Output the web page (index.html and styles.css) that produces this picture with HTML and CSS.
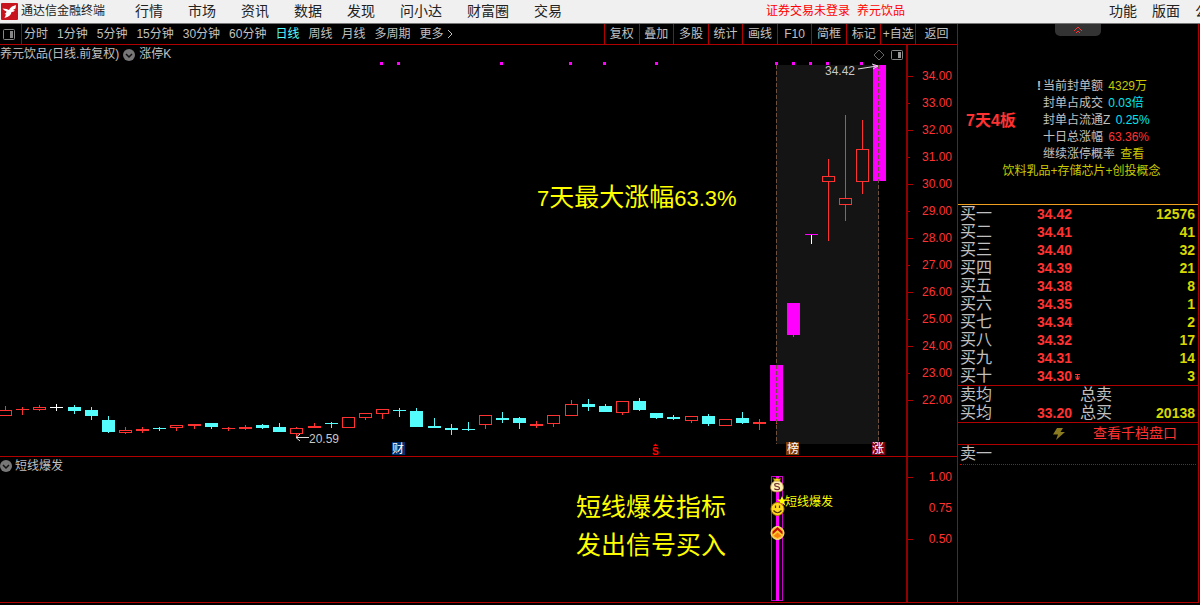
FILE: index.html
```html
<!DOCTYPE html>
<html lang="zh-CN">

<head>
    <meta charset="utf-8" />
    <title>通达信金融终端</title>
    <link rel="stylesheet" href="styles.css">
    <script src="chart.js" defer></script>
</head>

<body>
    <header class="top">
        <svg class="logo" viewBox="0 0 17 17" width="17" height="17">
            <rect width="17" height="17" rx="1" fill="#c8141c" />
            <path d="M1.500 5.500l4 .5 2.500 1q1-2.500 3-3.500l4-1.500-.5 3.500-2.500 1.500 2 .5q-1.500 1.500-3.500 1.500-.5 4.500-7 6l1.500-3.500-1.500-.500q2-1 2-2.500-2.500-1-4-3z" fill="#fff" />
        </svg>
        <span class="brand">通达信金融终端</span>
        <nav class="menu">
            <a href="#">行情</a>
            <a href="#">市场</a>
            <a href="#">资讯</a>
            <a href="#">数据</a>
            <a href="#">发现</a>
            <a href="#">问小达</a>
            <a href="#">财富圈</a>
            <a href="#">交易</a>
        </nav>
        <div class="status"><span>证券交易未登录</span><span>养元饮品</span></div>
        <nav class="tools">
            <a href="#">功能</a>
            <a href="#">版面</a>
            <a href="#">公</a>
        </nav>
    </header>

    <div class="main">
        <main class="left">
            <div class="bar">
                <button class="side" aria-label="侧栏">
                    <svg viewBox="0 0 12 11" width="12" height="11">
                        <rect x=".5" y=".5" width="11" height="10" rx="1" fill="none" stroke="#888" />
                        <path d="M7 2h3v7H7z" fill="#888" />
                    </svg>
                </button>
                <div class="period">
                    <button>分时</button>
                    <button>1分钟</button>
                    <button>5分钟</button>
                    <button>15分钟</button>
                    <button>30分钟</button>
                    <button>60分钟</button>
                    <button class="on">日线</button>
                    <button>周线</button>
                    <button>月线</button>
                    <button>多周期</button>
                    <button>更多
                        <svg viewBox="0 0 6 10" width="6" height="10"><path d="M1 1l4 4-4 4" fill="none" stroke="#c0c0c0" /></svg>
                    </button>
                </div>
                <div class="acts">
                    <button>复权</button>
                    <button>叠加</button>
                    <button>多股</button>
                    <button>统计</button>
                    <button>画线</button>
                    <button>F10</button>
                    <button>简框</button>
                    <button>标记</button>
                    <button>+自选</button>
                    <button>返回</button>
                </div>
            </div>

            <section class="chart">
                <div class="plot">
                    <div class="head">
                        <span>养元饮品(日线.前复权)</span>
                        <svg viewBox="0 0 12 12" width="12" height="12">
                            <circle cx="6" cy="6" r="6" fill="#777" />
                            <path d="M3 5l3 3 3-3" fill="none" stroke="#111" stroke-width="1.500" />
                        </svg>
                        <span>涨停K</span>
                        <svg class="corner" viewBox="0 0 30 12" width="30" height="12">
                            <path d="M6 1l5 5-5 5-5-5z" fill="none" stroke="#666" />
                            <rect x="18.500" y="1.500" width="11" height="9" rx="1" fill="none" stroke="#888" />
                            <path d="M25 3h3v6h-3z" fill="#999" />
                        </svg>
                    </div>
                    <svg class="canvas" viewBox="0 62 906 394" preserveAspectRatio="xMaxYMin meet">
                        <rect x="776" y="65" width="103" height="379" fill="#141414" />
                        <g id="candles" shape-rendering="crispEdges"></g>
                        <path class="range" d="M776.500 65v379M878.500 65v379" />
                        <g id="dots" fill="#f0f"></g>
                        <path class="arrow" d="M296 437.500h13M300 434l-4 3.500 4 3.500M858 69l19-3M872 64l6 2-5 3" />
                        <text class="note" x="309" y="443">20.59</text>
                        <text class="note" x="825" y="75">34.42</text>
                        <text class="big" x="537" y="206"><tspan class="num">7</tspan>天最大涨幅<tspan class="num">63.3%</tspan></text>
                        <rect x="392" y="442" width="13" height="13" fill="#003070" />
                        <text class="tag" x="392" y="453">财</text>
                        <rect x="786" y="442" width="13" height="13" fill="#803c00" />
                        <text class="tag" x="787" y="453">榜</text>
                        <rect x="872" y="442" width="13" height="13" fill="#800010" />
                        <text class="tag" x="872" y="453">涨</text>
                        <path d="M655.500 443.500l2.500 2.500h-5z" fill="#f00" />
                        <text class="dollar" x="652" y="455">S</text>
                    </svg>
                </div>
                <ul class="axis">
                    <li>34.00</li>
                    <li>33.00</li>
                    <li>32.00</li>
                    <li>31.00</li>
                    <li>30.00</li>
                    <li>29.00</li>
                    <li>28.00</li>
                    <li>27.00</li>
                    <li>26.00</li>
                    <li>25.00</li>
                    <li>24.00</li>
                    <li>23.00</li>
                    <li>22.00</li>
                </ul>
            </section>

            <section class="chart sub">
                <div class="plot">
                    <div class="head">
                        <svg viewBox="0 0 12 12" width="12" height="12">
                            <circle cx="6" cy="6" r="6" fill="#777" />
                            <path d="M3 5l3 3 3-3" fill="none" stroke="#111" stroke-width="1.500" />
                        </svg>
                        <span>短线爆发</span>
                    </div>
                    <svg class="canvas" viewBox="0 474 906 128" preserveAspectRatio="xMaxYMin meet">
                        <rect x="771.500" y="476.500" width="11" height="124" fill="none" stroke="#c800c8" />
                        <rect x="776" y="476" width="3" height="125" fill="#f0f" />
                        <!-- 钱袋 -->
                        <path d="M773 478l2 1 2-1 2 1 2-1-1.500 4h-5z" fill="#ffe020" stroke="#5a3a00" stroke-width=".7" />
                        <path d="M774.500 481h5q4.500 2.500 4 7-.5 4-6.500 4t-6.500-4q-.5-4.500 4-7z" fill="#fff0b0" stroke="#a87820" stroke-width=".7" />
                        <path d="M779.500 484.500q-1-1-2.500-1-2.500 0-2.300 1.500 0 1.200 2.300 1.500 2.500.3 2.500 1.700 0 1.500-2.500 1.500-1.800 0-2.700-1" fill="none" stroke="#703030" stroke-width="1.200" />
                        <path class="star" d="M782 496l1.500 3.500h3.500l-2.800 2.300 1 3.700-3.200-2.200-3.200 2.200 1-3.700-2.800-2.300h3.500z" />
                        <text class="sig" x="785" y="506">短线爆发</text>
                        <!-- 笑脸 -->
                        <circle cx="777.500" cy="509" r="6.500" fill="#ffd820" stroke="#b88000" />
                        <path d="M775.500 505.500v2.500M779.500 505.500v2.500M773.500 510.500q4 4.500 8 0" fill="none" stroke="#4a3000" stroke-width="1.200" />
                        <!-- 买入箭头 -->
                        <circle cx="777.500" cy="533" r="6.500" fill="#ffc830" stroke="#ffe890" />
                        <path d="M772.500 534.500l5-4.500 5 4.500v-3l-5-4.500-5 4.500z" fill="#c01000" />
                        <path d="M773.500 536l4-3.500 4 3.500-4 2z" fill="#f88010" />
                        <text class="big" x="576" y="516">短线爆发指标</text>
                        <text class="big" x="576" y="554">发出信号买入</text>
                    </svg>
                </div>
                <ul class="axis">
                    <li>1.00</li>
                    <li>0.75</li>
                    <li>0.50</li>
                </ul>
            </section>
        </main>

        <aside class="right">
            <button class="fold" aria-label="收起">
                <svg viewBox="0 0 10 8" width="10" height="8"><path d="M1 5l4-4 4 4M3 7l2-2 2 2" fill="none" stroke="#f33" /></svg>
            </button>
            <div class="info">
                <strong>7天4板</strong>
                <ul>
                    <li><i>!</i>当前封单额 <b class="y">4329万</b></li>
                    <li><i></i>封单占成交 <b class="c">0.03倍</b></li>
                    <li><i></i>封单占流通Z <b class="c">0.25%</b></li>
                    <li><i></i>十日总涨幅 <b class="r">63.36%</b></li>
                    <li><i></i>继续涨停概率 <a class="y" href="#">查看</a></li>
                </ul>
                <p>饮料乳品+存储芯片+创投概念</p>
            </div>
            <table class="book">
                <tbody>
                    <tr><th>买一</th><td>34.42</td><td colspan="2">12576</td></tr>
                    <tr><th>买二</th><td>34.41</td><td colspan="2">41</td></tr>
                    <tr><th>买三</th><td>34.40</td><td colspan="2">32</td></tr>
                    <tr><th>买四</th><td>34.39</td><td colspan="2">21</td></tr>
                    <tr><th>买五</th><td>34.38</td><td colspan="2">8</td></tr>
                    <tr><th>买六</th><td>34.35</td><td colspan="2">1</td></tr>
                    <tr><th>买七</th><td>34.34</td><td colspan="2">2</td></tr>
                    <tr><th>买八</th><td>34.32</td><td colspan="2">17</td></tr>
                    <tr><th>买九</th><td>34.31</td><td colspan="2">14</td></tr>
                    <tr>
                        <th>买十</th>
                        <td>34.30<svg viewBox="0 0 7 8" width="7" height="8"><path d="M1 1.500h5M1 4h5M3.500 1v5M2 5.500h3L3.500 7z" stroke="#f33" fill="#f33" /></svg></td>
                        <td colspan="2">3</td>
                    </tr>
                </tbody>
                <tbody class="sum">
                    <tr><th>卖均</th><td></td><th>总卖</th><td></td></tr>
                    <tr><th>买均</th><td>33.20</td><th>总买</th><td>20138</td></tr>
                </tbody>
            </table>
            <div class="more">
                <svg viewBox="0 0 12 12" width="12" height="12"><path d="M4 0h6L7.500 4H12L3 12l2-5.500H0z" fill="#8a7a20" /></svg>
                <a href="#">查看千档盘口</a>
            </div>
            <div class="ask">卖一</div>
        </aside>
    </div>
</body>

</html>
```

FILE: styles.css
```css
* {
    margin: 0;
    padding: 0;
    box-sizing: border-box;
}

body {
    background: #000;
    color: #c0c0c0;
    font: 12px/17px "Liberation Sans", "Noto Sans CJK SC", sans-serif;
    overflow-x: hidden;
}

li {
    list-style: none;
}

a {
    color: inherit;
    text-decoration: none;
}

button {
    background: none;
    border: 0;
    color: inherit;
    font: inherit;
    white-space: nowrap;
    cursor: pointer;
}

svg {
    display: block;
    flex: none;
}

/* 顶部菜单 */
.top {
    display: flex;
    align-items: center;
    height: 24px;
    background: #f0f0f0;
    border-bottom: 1px solid #777;
    color: #222;
    padding-left: 1px;
    white-space: nowrap;
    overflow: hidden;
}

.brand {
    margin-left: 3px;
}

.menu,
.tools {
    display: flex;
    font-size: 14px;
}

.menu {
    gap: 25px;
    margin-left: 30px;
}

.status {
    display: flex;
    gap: 7px;
    margin: 0 204px 0 auto;
    color: #f00;
}

.tools {
    flex: none;
    gap: 15px;
    width: 91px;
    overflow: hidden;
}

.main {
    display: grid;
    grid-template-columns: minmax(0, 1fr) 243px;
}

.left {
    min-width: 0;
}

/* 周期工具栏 */
.bar {
    display: flex;
    height: 21px;
    border-bottom: 1px solid #b00000;
}

.side {
    width: 22px;
    padding-left: 3px;
    border-right: 1px solid #b00000;
}

.period {
    display: flex;
    gap: 9px;
    padding-left: 2px;
}

.period button {
    display: flex;
    align-items: center;
    gap: 3px;
}

.period .on {
    color: #54fcfc;
}

.acts {
    display: grid;
    grid-template-columns: repeat(9, 1fr) 42px;
    width: 353px;
    margin-left: auto;
}

.acts button {
    border-left: 1px solid #b00000;
}

/* 图表 */
.chart {
    display: grid;
    grid-template-columns: minmax(0, 1fr) 51px;
    border-bottom: 1px solid #b00000;
}

.head {
    display: flex;
    align-items: center;
    gap: 4px;
    height: 17px;
    padding-top: 2px;
    white-space: nowrap;
}

.sub .head {
    gap: 3px;
    padding-top: 1px;
}

.corner {
    margin: 0 3px 0 auto;
}

.canvas {
    width: 100%;
    height: auto;
}

.axis {
    border-left: 2px solid #900000;
    padding: 18px 5px 0 0;
    color: #ff3232;
    text-align: right;
}

.axis li {
    position: relative;
    line-height: 27px;
}

.axis li:before {
    content: "";
    position: absolute;
    left: 0;
    top: 13px;
    width: 5px;
    height: 1px;
    background: #b00000;
}

.axis li:nth-child(even):before {
    width: 2px;
}

.sub .axis {
    padding-top: 5px;
}

.sub .axis li {
    line-height: 31px;
}

.sub .axis li:before {
    top: 15px;
}

.sub .axis li:nth-child(even):before {
    display: none;
}

.range {
    stroke: #6e5040;
    stroke-dasharray: 4 2;
}

.arrow {
    fill: none;
    stroke: #ddd;
}

.note {
    fill: #c8c8c8;
}

.big {
    fill: #ff0;
    font-size: 25px;
}

.big .num {
    font-size: 22px;
}

.tag {
    fill: #fff;
}

.dollar {
    fill: #f00;
    font-size: 10px;
    font-weight: bold;
}

.star,
.sig {
    fill: #ff0;
}

/* 右侧盘口 */
.right {
    border: solid #b00000;
    border-width: 0 1px 1px;
    margin-right: 1px;
}

.fold {
    display: flex;
    align-items: center;
    justify-content: center;
    width: 46px;
    height: 12px;
    margin: 0 auto;
    background: #333;
    border-radius: 0 0 5px 5px;
}

.info {
    display: grid;
    grid-template-columns: 79px 1fr;
    padding: 42px 0 24px;
    border-bottom: 1px solid #f0a020;
}

.info strong {
    align-self: center;
    padding-left: 8px;
    color: #ff3232;
    font-size: 16px;
}

.info i {
    display: inline-block;
    width: 6px;
    font-style: normal;
    font-weight: bold;
}

.info b {
    font-weight: normal;
}

.info b,
.info a {
    margin-left: 2px;
}

.info p {
    grid-column: 1 / 3;
    padding-left: 7px;
    text-align: center;
    color: #c8c800;
}

.y {
    color: #c8c800;
}

.c {
    color: #00e6f0;
}

.r {
    color: #ff3232;
}

.book {
    width: 100%;
    table-layout: fixed;
    border-collapse: collapse;
}

.book th:first-child {
    width: 79px;
    padding-left: 2px;
}

.book td:nth-child(2) {
    width: 43px;
}

.book th,
.ask {
    font-size: 16px;
    font-weight: normal;
    text-align: left;
}

.book th,
.book td {
    height: 18px;
    line-height: 18px;
    white-space: nowrap;
}

.book td {
    color: #ff3232;
    font-size: 14px;
    font-weight: bold;
}

.book td svg {
    display: inline-block;
    margin-left: 2px;
}

.book td:last-child {
    padding-right: 3px;
    color: #d8d800;
    text-align: right;
}

.sum {
    border-top: 1px solid #b00000;
}

.more {
    display: flex;
    align-items: center;
    gap: 28px;
    height: 23px;
    padding-left: 95px;
    border: solid #b00000;
    border-width: 1px 0;
    color: #ff3232;
    font-size: 14px;
}

.ask {
    height: 20px;
    margin: 0 2px;
    line-height: 18px;
    border-bottom: 1px dotted #d00000;
}
```

FILE: chart.js
```javascript
var NS = 'http://www.w3.org/2000/svg';
var RED = '#ff3232', CYAN = '#54fcfc', PINK = '#ff00ff', WHITE = '#ffffff';

// 类型, 实体上沿, 实体下沿, 最高, 最低
var aData = [
    ['u', 410, 416, 406, 416], ['u', 409, 410, 407, 415], ['u', 407, 410, 405, 411], ['w', 407, 408, 404, 411],
    ['d', 407, 411, 405, 414], ['d', 410, 416, 407, 420], ['d', 420, 432, 416, 433], ['u', 430, 433, 427, 434],
    ['u', 429, 431, 427, 433], ['d', 428, 429, 427, 431], ['u', 425, 428, 425, 431], ['u', 424, 426, 424, 429],
    ['d', 423, 427, 423, 429], ['u', 428, 429, 427, 431], ['u', 427, 429, 425, 430], ['d', 425, 428, 424, 429],
    ['d', 427, 432, 423, 432], ['u', 428, 434, 427, 437], ['u', 426, 428, 423, 428], ['d', 423, 424, 422, 428],
    ['u', 417, 428, 417, 428], ['u', 413, 418, 413, 420], ['u', 409, 414, 409, 419], ['d', 410, 411, 408, 417],
    ['d', 411, 427, 408, 427], ['d', 426, 428, 418, 428], ['d', 428, 430, 424, 435], ['d', 429, 430, 422, 431],
    ['u', 415, 425, 415, 429], ['d', 418, 420, 412, 423], ['d', 418, 423, 417, 429], ['u', 424, 426, 421, 428],
    ['u', 415, 424, 415, 427], ['u', 404, 416, 400, 416], ['d', 404, 407, 399, 411], ['d', 406, 412, 404, 412],
    ['u', 401, 413, 401, 415], ['d', 401, 410, 398, 411], ['d', 413, 418, 413, 419], ['d', 417, 419, 415, 420],
    ['u', 416, 421, 416, 423], ['d', 416, 424, 414, 426], ['u', 419, 426, 419, 426], ['d', 418, 423, 412, 424],
    ['u', 422, 424, 419, 430], ['z', 365, 421, 365, 424], ['z', 303, 335, 303, 337], ['t', 234, 235, 234, 244],
    ['u', 176, 182, 159, 241], ['u', 198, 205, 115, 221], ['u', 149, 182, 120, 194], ['z', 65, 181, 65, 181]
];
var aDots = [381, 398, 501, 570, 604, 656, 776, 793, 810, 827, 861];

function rect(oParent, x, y, w, h, color) {
    var oRect = document.createElementNS(NS, 'rect');
    oRect.setAttribute('x', x);
    oRect.setAttribute('y', y);
    oRect.setAttribute('width', w);
    oRect.setAttribute('height', h);
    oRect.setAttribute('fill', color);
    oParent.appendChild(oRect);
}

var oCandles = document.getElementById('candles');
for (var i = 0; i < aData.length; i++) {
    var d = aData[i];
    var x = Math.round(5 + i * 17.14);
    var color = { u: RED, d: CYAN, w: WHITE, z: PINK, t: PINK }[d[0]];

    rect(oCandles, x, d[3], 1, d[4] - d[3], d[0] == 'z' ? RED : d[0] == 't' ? WHITE : color);
    rect(oCandles, x - 6, d[1], 13, d[2] - d[1], color);
    // 阳线空心
    if (d[0] == 'u' && d[2] - d[1] > 2) {
        rect(oCandles, x - 5, d[1] + 1, 11, d[2] - d[1] - 2, i > 44 ? '#141414' : '#000');
    }
}

var oDots = document.getElementById('dots');
for (var i = 0; i < aDots.length; i++) {
    rect(oDots, aDots[i] - 1, 62, 3, 3, PINK);
}
```
